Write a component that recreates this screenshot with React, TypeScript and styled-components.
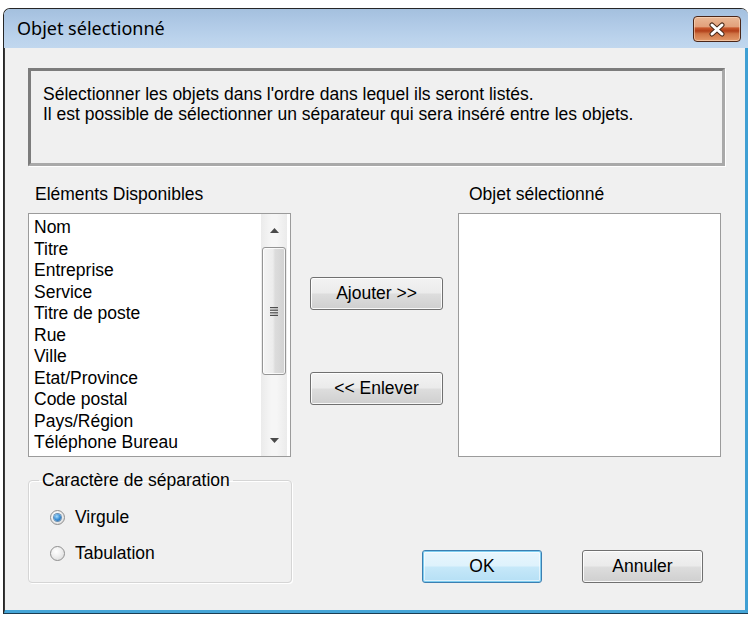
import styled, { createGlobalStyle } from 'styled-components';

const GlobalStyle = createGlobalStyle`
  html, body {
    margin: 0;
    padding: 0;
    background: #ffffff;
  }
  body {
    font-family: "Liberation Sans", Arial, sans-serif;
    color: #000;
  }
`;

const Window = styled.div`
  margin: 8px 3px 0 3px;
  width: 745px;
  height: 606px;
  box-sizing: border-box;
  border: 1px solid #262626;
  border-bottom-color: #1c3d52;
  border-right: none;
  border-radius: 7px 7px 0 0;
  display: flex;
  flex-direction: column;
  overflow: hidden;
`;

const TitleBar = styled.div`
  height: 39px;
  flex: none;
  display: flex;
  align-items: center;
  justify-content: space-between;
  padding: 0 7px 0 13px;
  background: linear-gradient(to bottom, #a4c0de 0%, #afc9e6 35%, #bbd3ec 75%, #c1d7ee 100%);
`;

const TitleText = styled.span`
  font-family: "Noto Sans", "Open Sans", sans-serif;
  font-size: 18px;
  color: #000;
  padding-bottom: 1px;
`;

const CloseButton = styled.button`
  width: 48px;
  height: 26px;
  margin-top: 1px;
  padding: 0;
  border: 1px solid #4a2618;
  border-radius: 4px;
  display: flex;
  align-items: center;
  justify-content: center;
  background: linear-gradient(
    to bottom,
    #eab896 0%,
    #e2a07b 40%,
    #c9582c 46%,
    #b2401a 58%,
    #cf7445 70%,
    #e39a6a 100%
  );
  box-shadow: inset 0 0 0 1px rgba(255, 225, 200, 0.55);
`;

const Client = styled.div`
  flex: 1;
  background: #f0f0f0;
  border-left: 1px solid #3a3a3a;
  border-right: 3px solid #3f9fd3;
  border-bottom: 3px solid #45a5d7;
  padding: 20px 0 0 23px;
  display: flex;
  flex-direction: column;
`;

const InfoBox = styled.div`
  width: 697px;
  height: 98px;
  box-sizing: border-box;
  border: 3px solid;
  border-color: #7c7c7c #a9a9a9 #a9a9a9 #7c7c7c;
  box-shadow: 1px 1px 0 #ffffff;
  padding: 13px 0 0 12px;
  font-size: 17.5px;
  line-height: 20px;
`;

const Layout = styled.div`
  display: grid;
  grid-template-columns: 263px 167px 263px;
  grid-template-rows: auto 244px auto;
  margin-top: 18px;
`;

const ListLabel = styled.div<{ $indent: number }>`
  font-size: 17.5px;
  line-height: 20px;
  padding-left: ${(p) => p.$indent}px;
  margin-bottom: 9px;
`;

const ListBox = styled.div`
  box-sizing: border-box;
  height: 244px;
  border: 1px solid #9b9b9b;
  background: #ffffff;
  display: flex;
`;

const Items = styled.ul`
  flex: 1;
  margin: 0;
  padding: 3px 0 0 5px;
  list-style: none;
  overflow: hidden;
`;

const Item = styled.li`
  font-size: 17.5px;
  line-height: 21.5px;
  white-space: nowrap;
`;

const ScrollBar = styled.div`
  width: 26px;
  margin-right: 3px;
  background: linear-gradient(to right, #ebebeb, #f6f6f6 40%, #f6f6f6 60%, #ebebeb);
  display: flex;
  flex-direction: column;
`;

const ArrowButton = styled.div`
  height: 32px;
  flex: none;
  display: flex;
  align-items: center;
  justify-content: center;
`;

const Thumb = styled.div`
  height: 128px;
  margin: 1px 1px 0 1px;
  box-sizing: border-box;
  border: 1px solid #959595;
  border-radius: 3px;
  background: linear-gradient(to right, #f4f4f4 0%, #ececec 45%, #dcdcdc 55%, #d2d2d2 100%);
  box-shadow: inset 0 0 0 1px rgba(255, 255, 255, 0.8);
  display: flex;
  align-items: center;
  justify-content: center;
`;

const Track = styled.div`
  flex: 1;
`;

const MiddleColumn = styled.div`
  display: flex;
  flex-direction: column;
  padding: 64px 0 0 19px;
  gap: 62px;
`;

const Button = styled.button<{ $default?: boolean; $width: number }>`
  width: ${(p) => p.$width}px;
  height: 33px;
  padding: 0;
  font-family: "Liberation Sans", Arial, sans-serif;
  font-size: 17.5px;
  color: #000;
  border-radius: 3px;
  border: 1px solid ${(p) => (p.$default ? '#3c7fb1' : '#707070')};
  background: ${(p) =>
    p.$default
      ? 'linear-gradient(to bottom, #e9f6fd 0%, #def2fc 48%, #c6e8f9 52%, #b5dff5 100%)'
      : 'linear-gradient(to bottom, #f3f3f3 0%, #ebebeb 48%, #dddddd 52%, #cfcfcf 100%)'};
  box-shadow: ${(p) =>
    p.$default
      ? 'inset 0 0 0 1px #7fcdf0, inset 0 0 0 2px rgba(255,255,255,0.55)'
      : 'inset 0 0 0 1px rgba(255,255,255,0.85)'};
`;

const GroupBox = styled.fieldset`
  grid-column: 1;
  margin: 13px 0 0 0;
  width: 264px;
  box-sizing: border-box;
  border: 1px solid #d5d5d5;
  border-radius: 4px;
  box-shadow: inset 1px 1px 0 #ffffff, 1px 1px 0 #ffffff;
  padding: 17px 0 19px 21px;
  display: flex;
  flex-direction: column;
  gap: 16px;
`;

const Legend = styled.legend`
  font-size: 17.5px;
  line-height: 20px;
  padding: 0 3px;
  margin-left: -11px;
`;

const RadioRow = styled.label`
  display: flex;
  align-items: center;
  gap: 10px;
  font-size: 17.5px;
  line-height: 20px;
`;

const RadioCircle = styled.span`
  width: 15px;
  height: 15px;
  box-sizing: border-box;
  border-radius: 50%;
  border: 1px solid #8f8f8f;
  background: radial-gradient(circle at 40% 35%, #ffffff 0%, #f1f1f1 40%, #d6d6d6 100%);
  display: flex;
  align-items: center;
  justify-content: center;
  flex: none;
`;

const RadioDot = styled.span`
  width: 7px;
  height: 7px;
  border-radius: 50%;
  background: radial-gradient(circle at 40% 35%, #a8dcfb 0%, #3b8fd6 50%, #1a5c9e 100%);
  box-shadow: 0 0 0 1px #6a8fb0;
`;

const Footer = styled.div`
  grid-column: 2 / 4;
  align-self: end;
  justify-self: end;
  display: flex;
  gap: 40px;
  margin-right: 18px;
`;

const UpArrow = () => (
  <svg width="9" height="5" viewBox="0 0 9 5">
    <polygon points="0,5 4.5,0 9,5" fill="#4a4a4a" />
  </svg>
);

const DownArrow = () => (
  <svg width="9" height="5" viewBox="0 0 9 5">
    <polygon points="0,0 9,0 4.5,5" fill="#4a4a4a" />
  </svg>
);

const Grip = () => (
  <svg width="8" height="9" viewBox="0 0 8 9">
    <rect x="0" y="0" width="8" height="1.2" fill="#4e4e4e" />
    <rect x="0" y="2.6" width="8" height="1.2" fill="#4e4e4e" />
    <rect x="0" y="5.2" width="8" height="1.2" fill="#4e4e4e" />
    <rect x="0" y="7.8" width="8" height="1.2" fill="#4e4e4e" />
  </svg>
);

const CloseIcon = () => (
  <svg width="18" height="15" viewBox="0 0 18 15">
    <path d="M4 3 L14 12 M14 3 L4 12" stroke="#4a2a1a" strokeWidth="5" strokeLinecap="round" />
    <path d="M4 3 L14 12 M14 3 L4 12" stroke="#ffffff" strokeWidth="3" strokeLinecap="round" />
  </svg>
);

const available = [
  'Nom',
  'Titre',
  'Entreprise',
  'Service',
  'Titre de poste',
  'Rue',
  'Ville',
  'Etat/Province',
  'Code postal',
  'Pays/Région',
  'Téléphone Bureau',
];

const App = () => {
  return (
    <>
      <GlobalStyle />
      <Window>
        <TitleBar>
          <TitleText>Objet sélectionné</TitleText>
          <CloseButton aria-label="Fermer">
            <CloseIcon />
          </CloseButton>
        </TitleBar>
        <Client>
          <InfoBox>
            Sélectionner les objets dans l'ordre dans lequel ils seront listés.
            <br />
            Il est possible de sélectionner un séparateur qui sera inséré entre les objets.
          </InfoBox>
          <Layout>
            <ListLabel $indent={7}>Eléments Disponibles</ListLabel>
            <div />
            <ListLabel $indent={11}>Objet sélectionné</ListLabel>

            <ListBox>
              <Items>
                {available.map((item) => (
                  <Item key={item}>{item}</Item>
                ))}
              </Items>
              <ScrollBar>
                <ArrowButton>
                  <UpArrow />
                </ArrowButton>
                <Thumb>
                  <Grip />
                </Thumb>
                <Track />
                <ArrowButton>
                  <DownArrow />
                </ArrowButton>
              </ScrollBar>
            </ListBox>
            <MiddleColumn>
              <Button $width={133}>Ajouter &gt;&gt;</Button>
              <Button $width={133}>&lt;&lt; Enlever</Button>
            </MiddleColumn>
            <ListBox />

            <GroupBox>
              <Legend>Caractère de séparation</Legend>
              <RadioRow>
                <RadioCircle>
                  <RadioDot />
                </RadioCircle>
                Virgule
              </RadioRow>
              <RadioRow>
                <RadioCircle />
                Tabulation
              </RadioRow>
            </GroupBox>
            <Footer>
              <Button $default $width={120}>OK</Button>
              <Button $width={121}>Annuler</Button>
            </Footer>
          </Layout>
        </Client>
      </Window>
    </>
  );
};

export default App;
